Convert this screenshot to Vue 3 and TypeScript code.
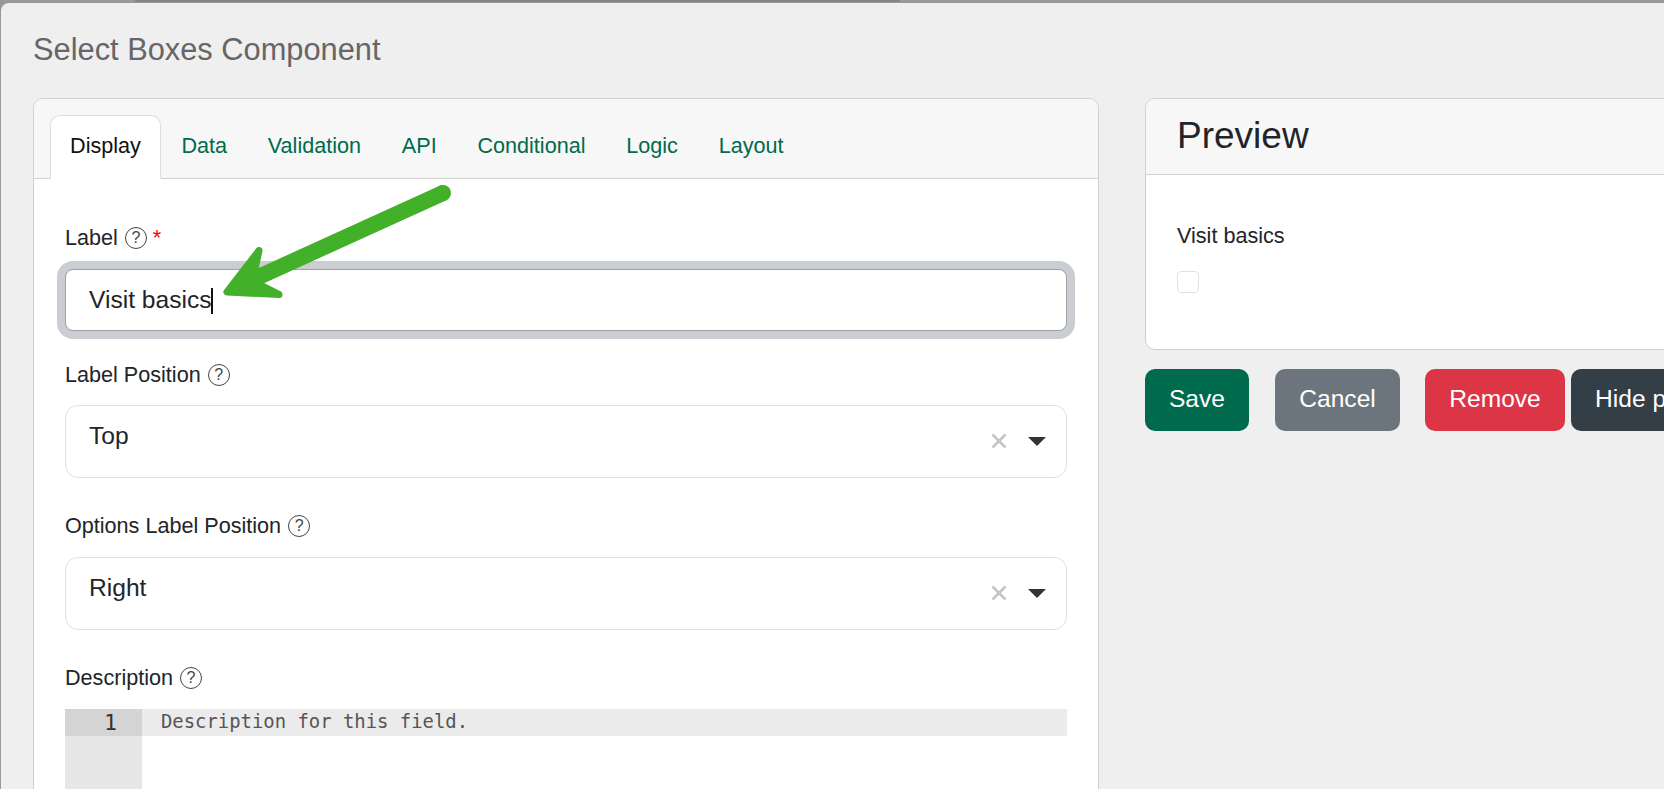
<script setup lang="ts">
const tabs = ['Display', 'Data', 'Validation', 'API', 'Conditional', 'Logic', 'Layout']
</script>

<template>
  <div class="page">
    <i class="strip"></i>
    <div class="modal">
      <h3 class="title">Select Boxes Component</h3>
      <div class="columns">
        <section class="card editor">
          <nav class="tabs">
            <a v-for="(t, i) in tabs" :key="t" class="tab" :class="{ active: i === 0 }">{{ t }}</a>
          </nav>
          <div class="form">
            <label class="lbl">Label <span class="help">?</span> <span class="req">*</span></label>
            <div class="input"><span>Visit basics</span><i class="caret"></i></div>

            <label class="lbl second">Label Position <span class="help">?</span></label>
            <div class="select first">
              <span>Top</span>
              <svg class="clear" viewBox="0 0 16 16"><path d="M1.5 1.5 14.5 14.5M14.5 1.5 1.5 14.5" /></svg>
              <i class="tri"></i>
            </div>

            <label class="lbl third">Options Label Position <span class="help">?</span></label>
            <div class="select">
              <span>Right</span>
              <svg class="clear" viewBox="0 0 16 16"><path d="M1.5 1.5 14.5 14.5M14.5 1.5 1.5 14.5" /></svg>
              <i class="tri"></i>
            </div>

            <label class="lbl third">Description <span class="help">?</span></label>
            <div class="code">
              <div class="gutter"><div class="num">1</div></div>
              <div class="lines"><div class="line">Description for this field.</div></div>
            </div>
          </div>
        </section>

        <div class="side">
          <section class="card preview">
            <h4 class="phead">Preview</h4>
            <div class="pbody">
              <div class="plabel">Visit basics</div>
              <span class="check"></span>
            </div>
          </section>
          <div class="buttons">
            <button class="btn save">Save</button>
            <button class="btn cancel">Cancel</button>
            <button class="btn remove">Remove</button>
            <button class="btn hide">Hide preview</button>
          </div>
        </div>
      </div>
    </div>
    <svg class="arrow" viewBox="0 0 1664 789" aria-hidden="true">
      <path d="M441 189 254 274 259 250.5 227 292 279 294.5 256 283 445 197Z" />
      <circle cx="443" cy="193" r="8" />
    </svg>
  </div>
</template>

<style>
html, body { margin: 0; height: 100%; overflow: hidden; background: #999; }
</style>

<style scoped>
.page {
  position: relative;
  width: 1664px;
  height: 789px;
  overflow: hidden;
  padding: 3px 0 0 1px;
  box-sizing: border-box;
  background: #999;
  font-family: "Liberation Sans", Arial, sans-serif;
  color: #212529;
}
.strip {
  position: absolute;
  left: 135px;
  top: 0;
  width: 765px;
  height: 2px;
  background: #858585;
}
.modal {
  width: 1800px;
  height: 900px;
  background: #efefef;
  border-radius: 8px 0 0 0;
  padding: 29px 0 0 32px;
  box-sizing: border-box;
}
.title {
  margin: 0;
  font-size: 30.8px;
  line-height: 36px;
  font-weight: 400;
  color: #666;
}
.columns {
  display: flex;
  gap: 46px;
  margin-top: 30px;
  align-items: flex-start;
}
.card {
  background: #fff;
  border: 1px solid #d0d0d0;
  border-radius: 10px;
  box-sizing: border-box;
  overflow: hidden;
}
.editor { width: 1066px; flex: none; height: 800px; }
.tabs {
  display: flex;
  height: 80px;
  box-sizing: border-box;
  background: #f7f7f7;
  border-bottom: 1px solid #d0d0d0;
  padding: 16px 0 0 16px;
}
.tab {
  padding: 0 19.4px;
  height: 64px;
  line-height: 60px;
  font-size: 21.6px;
  color: #006a4e;
  box-sizing: border-box;
  border: 1px solid transparent;
  white-space: nowrap;
  border-radius: 10px 10px 0 0;
}
.tab.active {
  background: #fff;
  color: #111;
  padding: 0 19.1px;
  border-color: #dedede #dedede #fff;
}
.form { padding: 47px 31px 0; }
.lbl {
  display: flex;
  align-items: center;
  gap: 7px;
  font-size: 21.6px;
  line-height: 24px;
}
.help {
  display: inline-flex;
  align-items: center;
  justify-content: center;
  width: 22px;
  height: 22px;
  box-sizing: border-box;
  border: 1.5px solid #444;
  border-radius: 50%;
  font-size: 16px;
  color: #444;
  line-height: 1;
}
.req { color: #f00; font-size: 21.6px; margin-left: -1px; }
.input {
  margin-top: 19px;
  height: 62px;
  box-sizing: border-box;
  border: 1px solid #a0a0a0;
  border-radius: 8px;
  box-shadow: 0 0 0 8px #cacdd1;
  background: #fff;
  display: flex;
  align-items: center;
  padding-left: 23px;
  font-size: 24.6px;
}
.caret {
  display: block;
  width: 2px;
  height: 26px;
  background: #111;
  margin: 2px 0 0 -1px;
}
.second { margin-top: 32px; }
.third { margin-top: 36px; }
.select {
  position: relative;
  display: flex;
  align-items: flex-start;
  margin-top: 19px;
  height: 73px;
  box-sizing: border-box;
  border: 1px solid #dfdfe6;
  border-radius: 13px;
  padding: 15px 20.5px 0 23px;
  font-size: 24.6px;
  line-height: 30px;
  background: #fff;
}
.select.first { margin-top: 18px; }
.select > span { flex: 1; }
.clear {
  width: 16px;
  height: 16px;
  margin: 12px 21px 0 0;
  fill: none;
  stroke: #c6c6c6;
  stroke-width: 2.8;
}
.tri {
  display: block;
  width: 0;
  height: 0;
  border-left: 9px solid transparent;
  border-right: 9px solid transparent;
  border-top: 9px solid #333;
  margin-top: 16px;
}
.code {
  display: flex;
  margin-top: 19px;
  height: 200px;
  font-family: "DejaVu Sans Mono", monospace;
  font-size: 18.9px;
}
.gutter { width: 77px; flex: none; background: #e6e6e6; }
.num {
  height: 27px;
  line-height: 27px;
  font-size: 21.6px;
  background: #d4d4d4;
  text-align: right;
  padding-right: 25px;
  color: #333;
}
.lines { flex: 1; background: #fff; }
.line {
  height: 27px;
  line-height: 24px;
  background: #ebebeb;
  padding-left: 19px;
  color: #555;
}
.side { width: 620px; flex: none; }
.preview { height: 252px; }
.phead {
  margin: 0;
  height: 76px;
  box-sizing: border-box;
  background: #f7f7f7;
  border-bottom: 1px solid #d0d0d0;
  padding-left: 31px;
  font-size: 37px;
  line-height: 74px;
  font-weight: 400;
}
.pbody { padding: 49px 31px 0; }
.plabel { font-size: 21.6px; line-height: 24px; }
.check {
  display: block;
  width: 22px;
  height: 22px;
  margin-top: 23px;
  box-sizing: border-box;
  border: 1px solid #dee2e6;
  border-radius: 4px;
}
.buttons { display: flex; margin-top: 19px; }
.btn {
  height: 62px;
  border: 0;
  border-radius: 10px;
  color: #fff;
  font: 400 24.6px "Liberation Sans", Arial, sans-serif;
  padding: 0 24px 2px;
  white-space: nowrap;
  flex: none;
}
.save { background: #006a4d; width: 104px; padding: 0 0 2px; }
.cancel { background: #6c757d; width: 125px; padding: 0 0 2px; margin-left: 26px; }
.remove { background: #dc3545; width: 140px; padding: 0 0 2px; margin-left: 25px; }
.hide { background: #343e47; margin-left: 6px; }
.arrow {
  position: absolute;
  inset: 0;
  width: 1664px;
  height: 789px;
  pointer-events: none;
}
.arrow path { fill: #43b02a; stroke: #43b02a; stroke-width: 7; stroke-linejoin: round; }
.arrow circle { fill: #43b02a; }
</style>
